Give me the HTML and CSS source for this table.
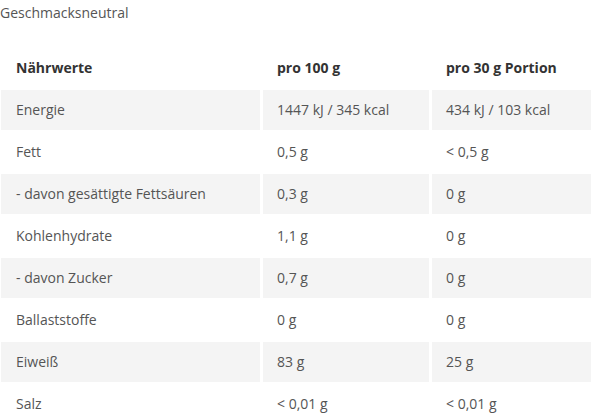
FILE: index.html
```html
<!DOCTYPE html>
<html lang="de">
<head>
<meta charset="utf-8">
<link rel="stylesheet" href="styles.css">
</head>
<body>
<p class="intro">Geschmacksneutral</p>
<div class="table">
  <div class="cell head">Nährwerte</div><div class="cell head">pro 100 g</div><div class="cell head">pro 30 g Portion</div>
  <div class="cell alt">Energie</div><div class="cell alt">1447 kJ / 345 kcal</div><div class="cell alt">434 kJ / 103 kcal</div>
  <div class="cell">Fett</div><div class="cell">0,5 g</div><div class="cell">&lt; 0,5 g</div>
  <div class="cell alt">- davon gesättigte Fettsäuren</div><div class="cell alt">0,3 g</div><div class="cell alt">0 g</div>
  <div class="cell">Kohlenhydrate</div><div class="cell">1,1 g</div><div class="cell">0 g</div>
  <div class="cell alt">- davon Zucker</div><div class="cell alt">0,7 g</div><div class="cell alt">0 g</div>
  <div class="cell">Ballaststoffe</div><div class="cell">0 g</div><div class="cell">0 g</div>
  <div class="cell alt">Eiweiß</div><div class="cell alt">83 g</div><div class="cell alt">25 g</div>
  <div class="cell">Salz</div><div class="cell">&lt; 0,01 g</div><div class="cell">&lt; 0,01 g</div>
</div>
</body>
</html>
```
FILE: styles.css
```css
html, body {
  margin: 0;
  padding: 0;
  background: #ffffff;
}
body {
  font-family: "Open Sans", "Liberation Sans", sans-serif;
  font-size: 14px;
  color: #555555;
  overflow: hidden;
}
.intro {
  margin: 0;
  padding-top: 3px;
  line-height: 20px;
  height: 45px;
}
.table {
  display: grid;
  grid-template-columns: 259px 166px 159px;
  column-gap: 3px;
  row-gap: 2px;
  padding-left: 1px;
}
.cell {
  height: 40px;
  display: flex;
  align-items: center;
  padding-left: 15px;
  line-height: 20px;
  white-space: nowrap;
}
.cell:nth-child(3n+2),
.cell:nth-child(3n) {
  padding-left: 14px;
}
.head {
  font-weight: 700;
  color: #333333;
}
.alt {
  background: #f4f4f4;
}
```
